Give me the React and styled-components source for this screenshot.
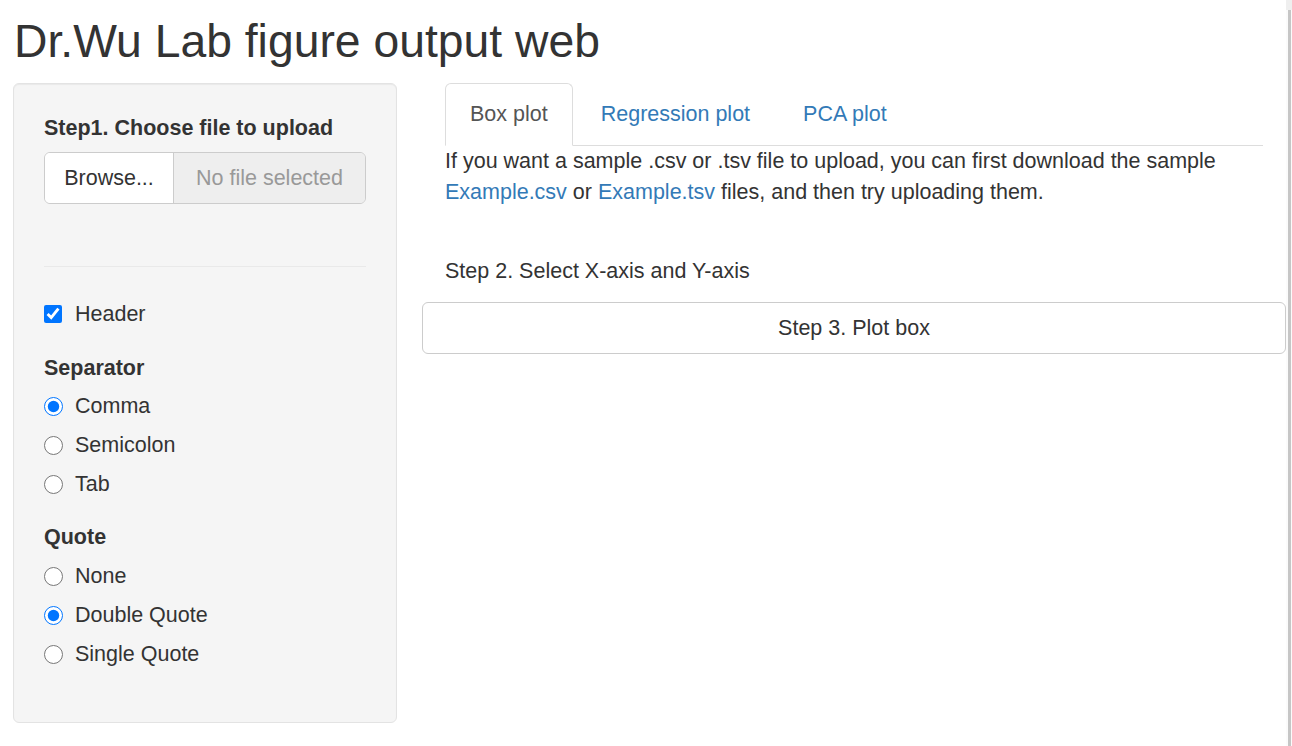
import React from "react";
import styled, { createGlobalStyle } from "styled-components";

const Global = createGlobalStyle`
  html, body { margin: 0; padding: 0; background: #fff; }
  body {
    font-family: "Liberation Sans", Arial, Helvetica, sans-serif;
    font-size: 21.5px;
    color: #333;
    overflow: hidden;
  }
  * { box-sizing: border-box; }
`;

const Shell = styled.div`
  display: flex;
  width: 1292px;
  height: 746px;
`;

const Page = styled.div`
  flex: 1;
  padding: 15px 0 0 13px;
`;

const ScrollTrack = styled.div`
  width: 6px;
  display: flex;
  flex-direction: column;
  background: #fbfbfb;
`;

const ScrollCap = styled.div`
  height: 10px;
  background: #efefef;
`;

const ScrollLine = styled.div`
  flex: 1;
  width: 3px;
  margin-left: 2px;
  background: #c6c6c6;
`;

const Title = styled.h2`
  margin: 0 0 16px 1px;
  font-size: 46.3px;
  font-weight: 400;
  line-height: 52px;
  color: #333;
`;

const Row = styled.div`
  display: flex;
  align-items: flex-start;
  gap: 25px;
`;

const Sidebar = styled.div`
  width: 384px;
  height: 640px;
  padding: 30px 30px 0 30px;
  background: #f5f5f5;
  border: 1px solid #e3e3e3;
  border-radius: 6px;
  box-shadow: inset 0 1px 1px rgba(0, 0, 0, 0.05);
`;

const FieldLabel = styled.div`
  font-weight: 700;
  line-height: 28px;
  margin-bottom: ${(p) => p.$mb || 10}px;
`;

const FileInput = styled.div`
  display: flex;
  height: 52px;
  border: 1px solid #ccc;
  border-radius: 6px;
  overflow: hidden;
`;

const BrowseBtn = styled.div`
  width: 129px;
  display: flex;
  align-items: center;
  justify-content: center;
  background: #fff;
  color: #333;
  border-right: 1px solid #ccc;
`;

const FileName = styled.div`
  flex: 1;
  display: flex;
  align-items: center;
  justify-content: center;
  background: #eee;
  color: #999;
`;

const Divider = styled.hr`
  margin: 62px 0 33px;
  border: 0;
  border-top: 1px solid #e9e9e9;
`;

const CheckRow = styled.label`
  display: flex;
  align-items: center;
  gap: 13px;
  height: 28px;
  line-height: 28px;
`;

const Box = styled.input`
  width: 18px;
  height: 18px;
  margin: 0;
  accent-color: #0075ff;
`;

const Group = styled.div`
  margin-top: ${(p) => p.$mt}px;
`;

const RadioList = styled.div`
  display: flex;
  flex-direction: column;
`;

const RadioRow = styled.label`
  display: flex;
  align-items: center;
  gap: 12px;
  height: 39px;
`;

const Radio = styled.input`
  width: 19px;
  height: 19px;
  margin: 0;
  accent-color: #0075ff;
`;

const Main = styled.div`
  flex: 1;
`;

const Inner = styled.div`
  padding: 0 23px;
`;

const Tabs = styled.div`
  display: flex;
  border-bottom: 1px solid #ddd;
  height: 63px;
`;

const Tab = styled.div`
  height: 63px;
  margin: 0 3px -1px 0;
  padding: 0 24px 1px;
  display: flex;
  align-items: center;
  border: 1px solid ${(p) => (p.$active ? "#ddd" : "transparent")};
  border-bottom-color: ${(p) => (p.$active ? "#fff" : "transparent")};
  border-radius: 6px 6px 0 0;
  background: ${(p) => (p.$active ? "#fff" : "transparent")};
  color: ${(p) => (p.$active ? "#555" : "#337ab7")};
`;

const Para = styled.p`
  margin: 0;
  line-height: 31px;
`;

const Link = styled.a`
  color: #337ab7;
  text-decoration: none;
`;

const StepLabel = styled.div`
  margin-top: 49px;
  line-height: 28px;
`;

const PlotButton = styled.button`
  display: block;
  width: 100%;
  height: 52px;
  margin-top: 17px;
  border: 1px solid #ccc;
  border-radius: 6px;
  background: #fff;
  color: #333;
  font-family: inherit;
  font-size: 21.5px;
`;

export default function App() {
  return (
    <>
      <Global />
      <Shell>
        <Page>
          <Title>Dr.Wu Lab figure output web</Title>
          <Row>
            <Sidebar>
              <FieldLabel>Step1. Choose file to upload</FieldLabel>
              <FileInput>
                <BrowseBtn>Browse...</BrowseBtn>
                <FileName>No file selected</FileName>
              </FileInput>
              <Divider />
              <CheckRow>
                <Box type="checkbox" defaultChecked />
                Header
              </CheckRow>
              <Group $mt={26}>
                <FieldLabel $mb={5}>Separator</FieldLabel>
                <RadioList>
                  <RadioRow><Radio type="radio" name="sep" defaultChecked />Comma</RadioRow>
                  <RadioRow><Radio type="radio" name="sep" />Semicolon</RadioRow>
                  <RadioRow><Radio type="radio" name="sep" />Tab</RadioRow>
                </RadioList>
              </Group>
              <Group $mt={19}>
                <FieldLabel $mb={6}>Quote</FieldLabel>
                <RadioList>
                  <RadioRow><Radio type="radio" name="quote" />None</RadioRow>
                  <RadioRow><Radio type="radio" name="quote" defaultChecked />Double Quote</RadioRow>
                  <RadioRow><Radio type="radio" name="quote" />Single Quote</RadioRow>
                </RadioList>
              </Group>
            </Sidebar>
            <Main>
              <Inner>
                <Tabs>
                  <Tab $active>Box plot</Tab>
                  <Tab>Regression plot</Tab>
                  <Tab>PCA plot</Tab>
                </Tabs>
                <Para>
                  If you want a sample .csv or .tsv file to upload, you can first download the sample{" "}
                  <Link href="#">Example.csv</Link> or <Link href="#">Example.tsv</Link> files, and then try uploading them.
                </Para>
                <StepLabel>Step 2. Select X-axis and Y-axis</StepLabel>
              </Inner>
              <PlotButton>Step 3. Plot box</PlotButton>
            </Main>
          </Row>
        </Page>
        <ScrollTrack>
          <ScrollCap />
          <ScrollLine />
        </ScrollTrack>
      </Shell>
    </>
  );
}
